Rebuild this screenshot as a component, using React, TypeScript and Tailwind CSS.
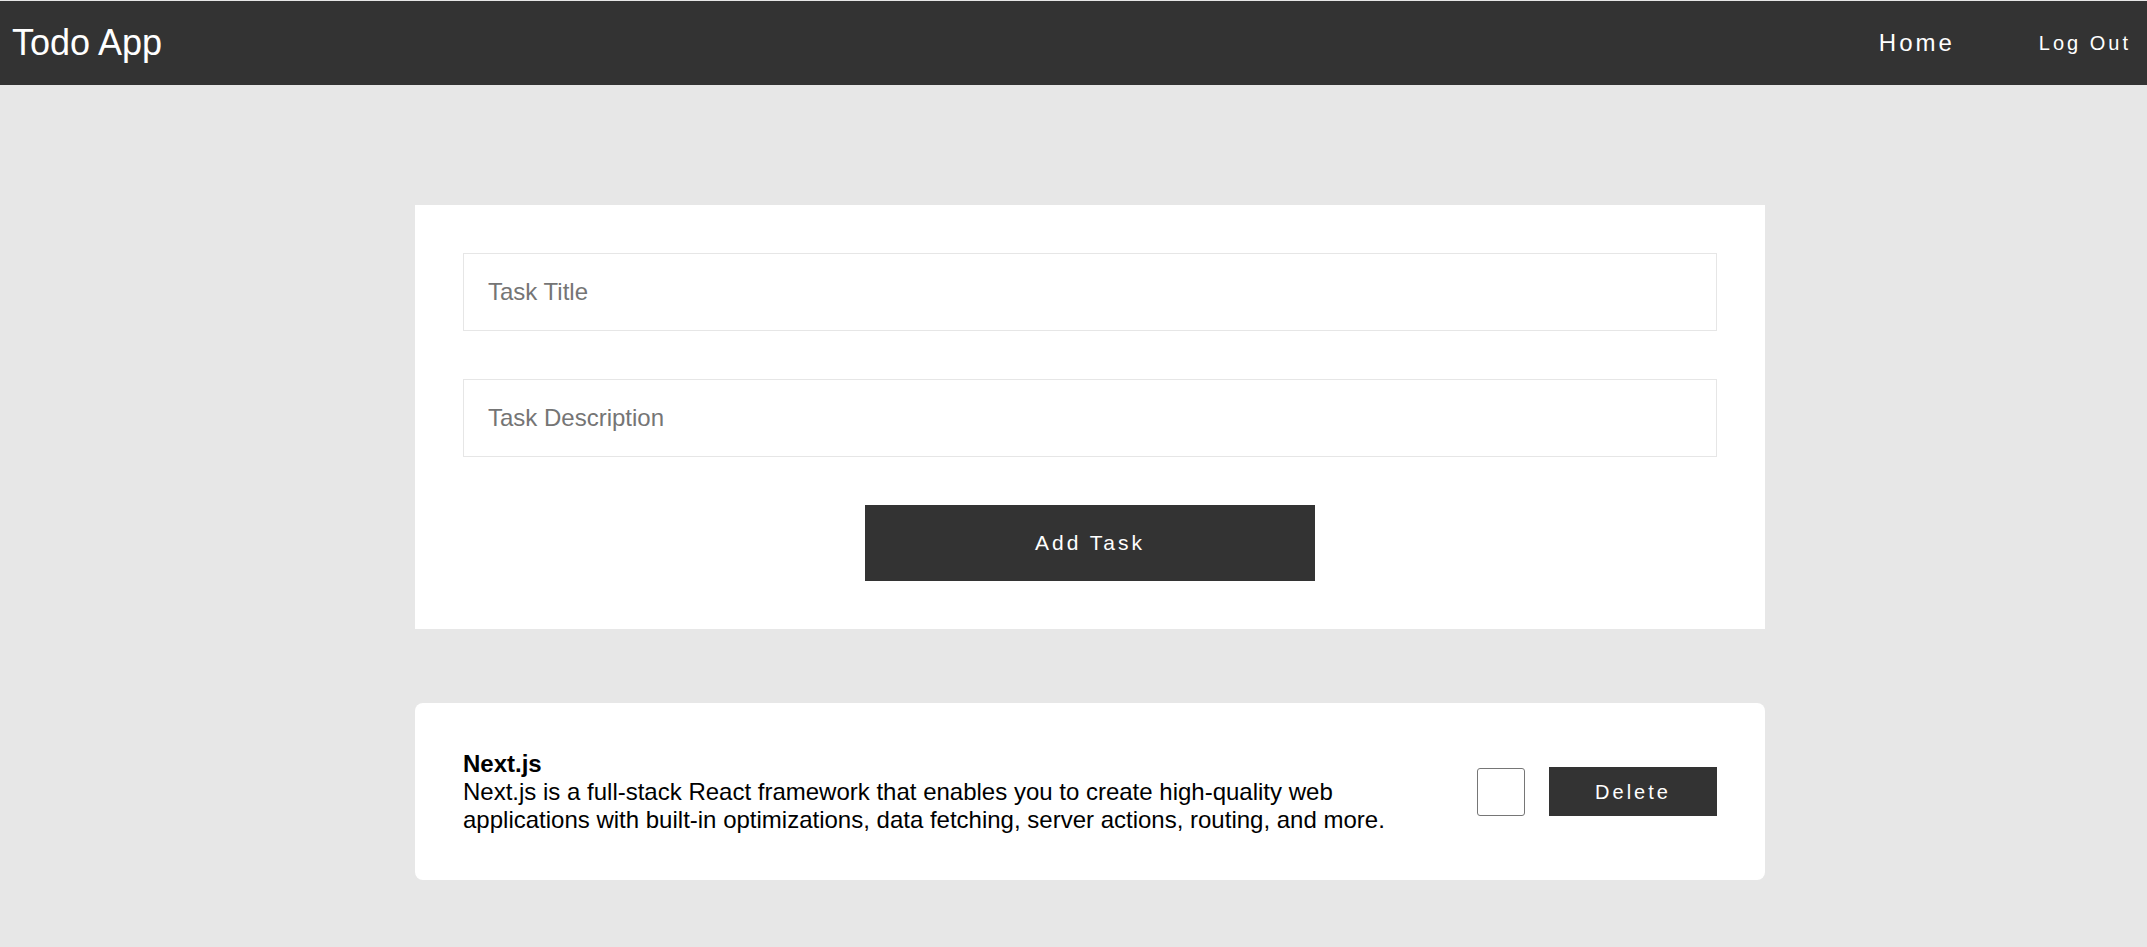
import React from "react";

export default function App() {
  return (
    <div
      className="min-h-[947px] bg-[#e7e7e7] pt-px pb-16"
      style={{ fontFamily: '"Liberation Sans", Arial, sans-serif' }}
    >
      <nav className="h-[84px] bg-[#333333] flex items-center justify-between pl-3 pr-4 text-white">
        <div className="text-[36px] leading-none">Todo App</div>
        <div className="flex items-center gap-[84px]">
          <a className="text-[24px] tracking-[3px]">Home</a>
          <a className="text-[20px] tracking-[3px]">Log Out</a>
        </div>
      </nav>

      <div className="ml-[415px] w-[1350px] mt-[120px] flex flex-col gap-[74px]">
        <div className="bg-white p-12 flex flex-col gap-12">
          <input
            type="text"
            placeholder="Task Title"
            className="h-[78px] w-full border border-[#e6e6e6] px-6 text-[24px] outline-none placeholder:text-[#757575]"
          />
          <input
            type="text"
            placeholder="Task Description"
            className="h-[78px] w-full border border-[#e6e6e6] px-6 text-[24px] outline-none placeholder:text-[#757575]"
          />
          <div className="flex justify-center">
            <button className="w-[450px] h-[76px] bg-[#333333] text-white text-[21px] tracking-[3px]">
              Add Task
            </button>
          </div>
        </div>

        <div className="bg-white rounded-lg px-12 h-[177px] flex items-center gap-6">
          <div className="flex-1 text-[24px] leading-[28px] text-black">
            <div className="font-bold">Next.js</div>
            <p>
              Next.js is a full-stack React framework that enables you to create high-quality web
              applications with built-in optimizations, data fetching, server actions, routing, and more.
            </p>
          </div>
          <input
            type="checkbox"
            className="appearance-none w-12 h-12 border-[1.5px] border-[#767676] rounded-[3px] bg-white shrink-0"
          />
          <button className="w-[168px] h-[49px] bg-[#333333] text-white text-[20px] tracking-[3px] shrink-0">
            Delete
          </button>
        </div>
      </div>
    </div>
  );
}
